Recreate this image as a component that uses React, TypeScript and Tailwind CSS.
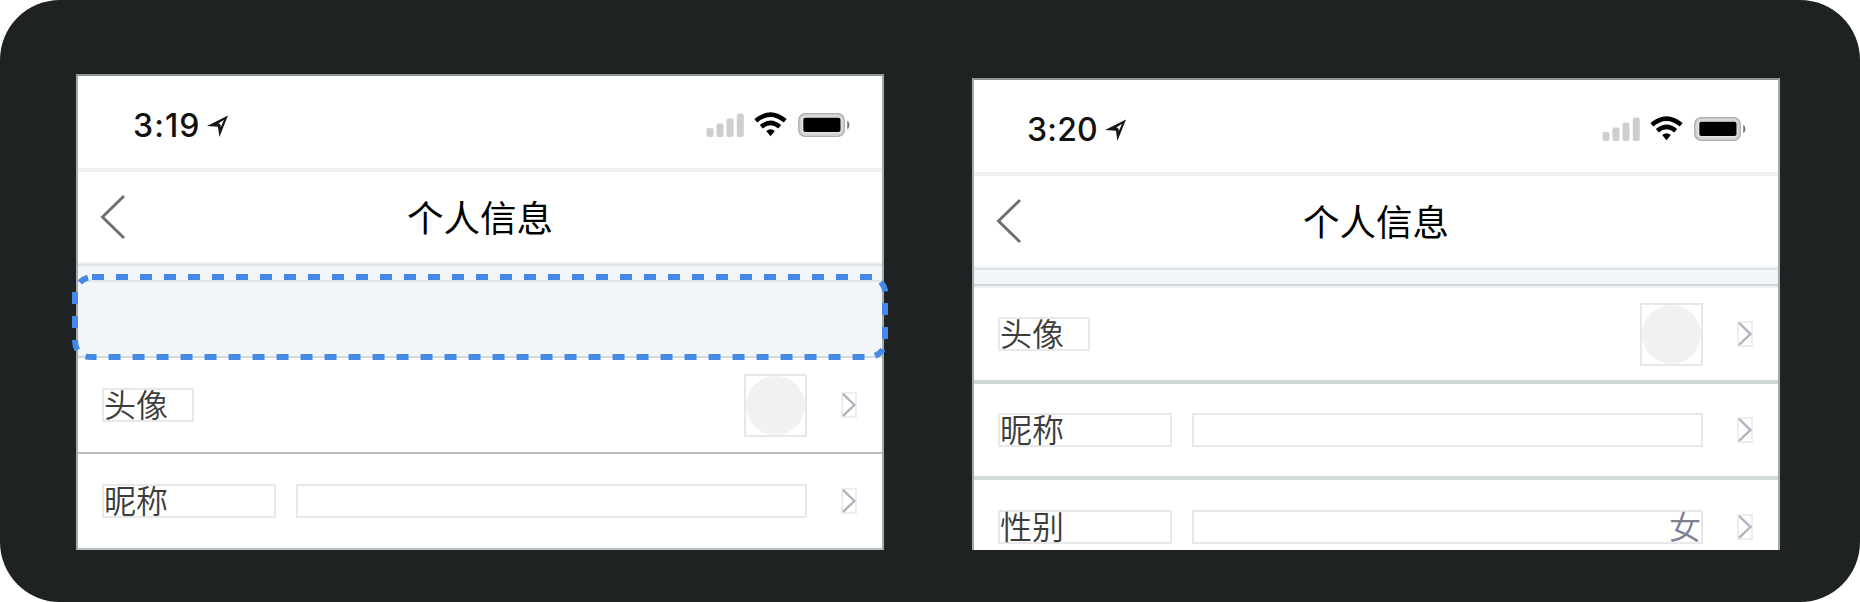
import React from "react";

const StatusIcons = () => (
  <svg width="146" height="28" viewBox="0 0 146 28" className="shrink-0">
    <g fill="#cecece">
      <rect x="0.5" y="16" width="7" height="9" rx="2" />
      <rect x="10.5" y="11.5" width="7" height="13.5" rx="2" />
      <rect x="20.5" y="6.5" width="7" height="18.5" rx="2" />
      <rect x="30.8" y="1.5" width="7" height="23.5" rx="2" />
    </g>
    <g fill="none" stroke="#000" strokeWidth="4.4">
      <path d="M49.8 8.8 Q64.5 -3.6 79.2 8.8" />
      <path d="M55.3 14.8 Q64.5 7 73.7 14.8" />
    </g>
    <path d="M60.2 19 Q64.5 15.4 68.8 19 L64.5 24.2 Z" fill="#000" />
    <rect x="92.8" y="1.6" width="45.4" height="22.8" rx="6.5" fill="#d6d6d6" stroke="#adadad" strokeWidth="1.4" />
    <rect x="96" y="5" width="39" height="16" rx="3" fill="#f2f2f2" opacity="0.6" />
    <rect x="97.3" y="5.8" width="37.2" height="14.2" rx="2" fill="#000" />
    <path d="M141.8 9.5 Q144.2 13 141.8 16.5 Z" fill="#555" stroke="#777" strokeWidth="1" />
  </svg>
);

const LocationArrow = () => (
  <svg width="22" height="24" viewBox="0 0 22 24" className="shrink-0">
    <path
      fillRule="evenodd"
      d="M0 12 L21 1.4 L12.4 23 L11 12.8 Z M11.4 9.6 L13.4 10.6 L13.8 13 L17 5.8 Z"
      fill="#161616"
    />
  </svg>
);

const Chevron = () => (
  <div className="h-[26px] w-[16px] shrink-0 border-2 border-[#eceeee]">
    <svg width="16" height="26" viewBox="0 0 16 26" className="-mt-0.5 -ml-0.5 max-w-none">
      <path d="M2 1.8 L13.4 13 L2 23.8" fill="none" stroke="#b1b3c0" strokeWidth="2.4" />
    </svg>
  </div>
);

type RowProps = {
  label: string;
  avatar?: boolean;
  value?: string;
  className: string;
};

const Row = ({ label, avatar, value, className }: RowProps) => (
  <div className={`box-content flex w-[755px] shrink-0 items-center pr-[25px] pl-[24px] ${className}`}>
    <div
      className={`flex h-[34px] shrink-0 items-center border-2 border-[#e6e9e8] pb-[5px] text-[32px] leading-none font-[350] whitespace-nowrap text-[#3c3c3c] ${
        avatar ? "w-[92px]" : "w-[174px]"
      }`}
    >
      {label}
    </div>
    {avatar ? (
      <div className="ml-auto size-[63px] border-2 border-[#e4e8e7] bg-white">
        <div className="size-full rounded-full bg-[#f1f1f1]" />
      </div>
    ) : (
      <div className="ml-5 flex h-[34px] flex-1 items-center justify-end border-2 border-[#e6e9e8] pb-[5px] text-[32px] leading-none font-[350] text-[#7d8094]">
        {value}
      </div>
    )}
    <div className="ml-[34px] flex">
      <Chevron />
    </div>
  </div>
);

type PhoneProps = {
  time: string;
  clock: string;
  className: string;
  children: React.ReactNode;
};

const Phone = ({ time, clock, className, children }: PhoneProps) => (
  <section
    className={`flex w-[808px] flex-col overflow-hidden border-x-2 border-t-2 border-x-[#a3abab] border-t-[#8b9393] bg-white ${className}`}
  >
    <header className="flex h-[92px] shrink-0 items-center justify-between pt-[7px] pr-[30px]">
      <div className={`flex items-center ${clock}`}>
        <span className="font-['Inter','Liberation_Sans',sans-serif] text-[32px] leading-none font-medium text-[#111]">
          {time}
        </span>
        <LocationArrow />
      </div>
      <StatusIcons />
    </header>
    <nav className="relative flex h-[96px] shrink-0 items-center justify-center border-t-4 border-b-2 border-t-[#efefef] border-b-[#f1f2f3]">
      <svg width="26" height="46" viewBox="0 0 26 46" className="absolute top-[22px] left-[22px]">
        <path d="M24 2 L2.5 23 L24 44" fill="none" stroke="#6e6e6e" strokeWidth="2.9" />
      </svg>
      <h1 className="text-[36.5px] leading-none font-normal text-black">个人信息</h1>
    </nav>
    <div className="h-0.5 shrink-0 bg-[#dfe3e7]" />
    {children}
  </section>
);

const DashedFrame = () => (
  <svg width="816" height="86" viewBox="72 274 816 86" className="absolute top-[200px] -left-1">
    <g fill="none" stroke="#4489e8" strokeWidth="6">
      <path d="M92 277 H872" strokeDasharray="12 12" />
      <path d="M881 282 Q884.6 286.5 885.2 291.5" />
      <path d="M885 303 V339" strokeDasharray="12 12" />
      <path d="M883 349.5 Q880.5 353.5 875 355.8" />
      <path d="M864.5 357 H98" strokeDasharray="12 12" />
      <path d="M96.5 357 H91 Q88 357 85.5 356.4" />
      <path d="M75 340 Q75 345.5 77.3 350" />
      <path d="M75 328 V292" strokeDasharray="12 12" />
      <path d="M79.8 282.3 Q83.2 279 88 277.6" />
    </g>
  </svg>
);

export default function App() {
  return (
    <div className="bg-white">
      <main className="flex h-[602px] w-[1860px] items-start gap-[88px] rounded-[60px] bg-[#1e2223] pl-[76px] font-['Noto_Sans_CJK_SC',sans-serif]">
        <div className="relative mt-[74px]">
          <Phone time="3:19" clock="pl-[55px] gap-[6px] tracking-[1.1px]" className="h-[476px]">
            <div className="h-[14px] shrink-0 bg-[#f2f6fb]" />
            <div className="h-[78px] shrink-0 border-y-2 border-t-[#e0e4e8] border-b-[#d5d9de] bg-[#f2f6fb]" />
            <Row label="头像" avatar className="h-[94px] border-b-2 border-[#b9c0c2]" />
            <Row label="昵称" className="h-[94px] border-b-2 border-[#b9c0c2]" />
          </Phone>
          <DashedFrame />
        </div>
        <Phone time="3:20" clock="pl-[53px] gap-[7px] tracking-[0.2px]" className="mt-[78px] h-[472px]">
          <div className="h-[14px] shrink-0 bg-[#f2f6fb]" />
          <div className="h-[4px] shrink-0 border-t-2 border-[#d0d5d8] bg-[#f1f2f3]" />
          <Row label="头像" avatar className="h-[92px] border-b-4 border-[#d0d5d7]" />
          <Row label="昵称" className="h-[92px] border-b-4 border-[#d5dadd]" />
          <Row label="性别" value="女" className="h-[94px]" />
        </Phone>
      </main>
    </div>
  );
}
